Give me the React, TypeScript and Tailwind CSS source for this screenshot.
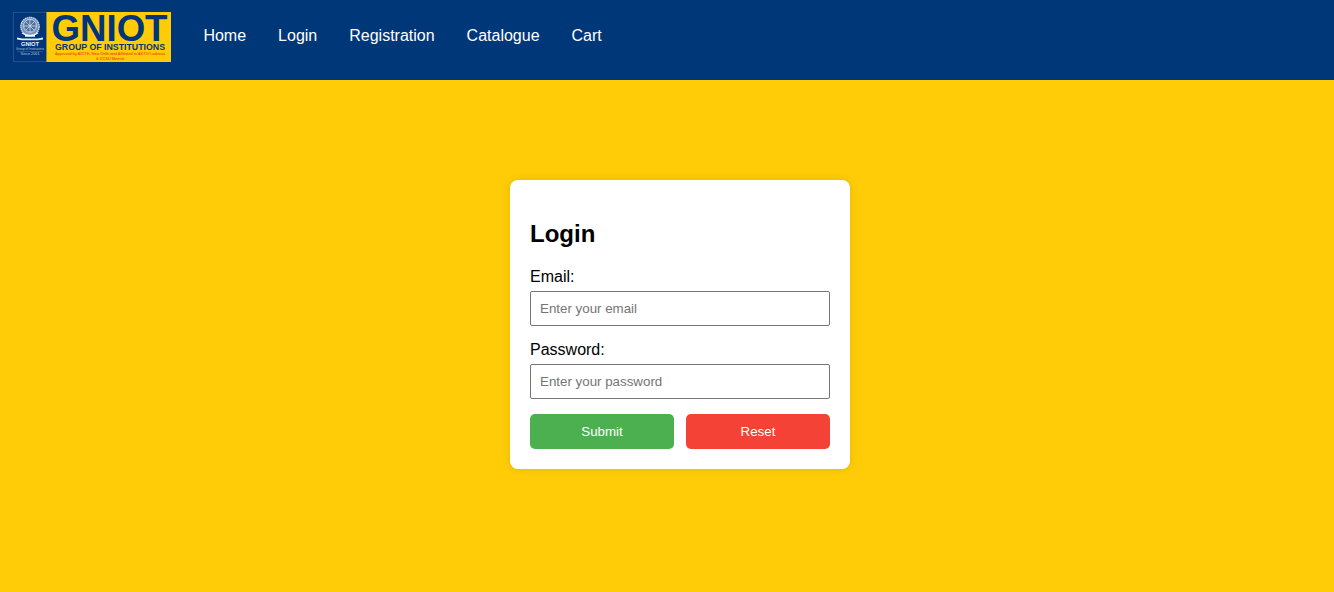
function Logo() {
  return (
    <svg width="158" height="50" viewBox="0 0 158 50" className="block shrink-0 overflow-visible" fontFamily="'Liberation Sans', Arial, sans-serif" textAnchor="middle">
      <rect x="0.5" y="0.5" width="33" height="49" fill="#00357a" stroke="#2c5690" strokeWidth="0.8" />
      <rect x="33.5" y="0" width="124.5" height="50" fill="#ffcc07" />
      <circle cx="17" cy="14.6" r="9.2" fill="#7894b8" stroke="#dbe5f0" strokeWidth="1.2" strokeDasharray="1.6 .5" />
      <circle cx="17" cy="13.8" r="6.4" fill="#496f9f" stroke="#e3ebf4" strokeWidth="0.8" />
      <path d="M17 8v12M11 14h12M13 10l8 8M21 10l-8 8" stroke="#d3deeb" strokeWidth="0.8" />
      <path d="M9 21q8 5 16 0M12 24h10" fill="none" stroke="#f4f7fb" strokeWidth="1.4" />
      <path d="M4 25.5l5 1h16l5-1v2l-5 .8H9l-5-.8z" fill="#e8eef5" />
      <text x="17" y="34.2" fontSize="6" fontWeight="700" fill="#f1f5fa" textLength="18" lengthAdjust="spacingAndGlyphs">GNIOT</text>
      <text x="17" y="38.4" fontSize="3.3" fill="#b4c5d9" textLength="28" lengthAdjust="spacingAndGlyphs">Group of Institutions</text>
      <path d="M4 39.6h26" stroke="#6484ad" strokeWidth="0.4" />
      <text x="17" y="43.4" fontSize="4" fill="#b4c5d9" textLength="19" lengthAdjust="spacingAndGlyphs">Since 2001</text>
      <text x="96.5" y="29" fontSize="36.5" fontWeight="700" fill="#00357a" textLength="116" lengthAdjust="spacingAndGlyphs">GNIOT</text>
      <text x="97" y="38" fontSize="8.8" fontWeight="700" fill="#00357a" textLength="110" lengthAdjust="spacingAndGlyphs">GROUP OF INSTITUTIONS</text>
      <text x="97" y="43.4" fontSize="4.4" fill="#f4511e" stroke="#f4511e" strokeWidth="0.12" textLength="110" lengthAdjust="spacingAndGlyphs">Approved by AICTE, New Delhi and Affiliated to AKTU Lucknow</text>
      <text x="97" y="47.8" fontSize="4.4" fill="#f4511e" stroke="#f4511e" strokeWidth="0.12" textLength="28" lengthAdjust="spacingAndGlyphs">&amp; CCSU Meerut</text>
    </svg>
  );
}

const links = ["Home", "Login", "Registration", "Catalogue", "Cart"];

function Field({ id, label, placeholder, type }: { id: string; label: string; placeholder: string; type: string }) {
  return (
    <div>
      <label htmlFor={id} className="mb-[5px] block leading-[18px]">{label}</label>
      <input id={id} type={type} placeholder={placeholder} className="block h-[35px] w-full rounded-[2px] border border-[#767676] bg-white px-[9px] text-[13.333px] placeholder:text-[#757575]" />
    </div>
  );
}

export default function App() {
  return (
    <div className="flex h-screen flex-col bg-[#ffcc07] font-['Liberation_Sans',Arial,sans-serif] text-base text-black">
      <header className="flex h-20 shrink-0 items-start bg-[#003778] pt-3 pl-[13px]">
        <Logo />
        <nav className="ml-[32.4px] flex gap-8 pt-[15px]">
          {links.map((link) => (
            <a key={link} href="#" className="leading-[18px] text-white">{link}</a>
          ))}
        </nav>
      </header>
      <main className="flex justify-center pt-[100px] pl-[26px]">
        <form className="h-[289px] w-[340px] rounded-lg bg-white px-5 pt-10 shadow-[0_0_10px_rgba(0,0,0,0.1)]">
          <h2 className="mb-[21px] text-2xl leading-[27px] font-bold">Login</h2>
          <div className="mb-[15px] flex flex-col gap-[15px]">
            <Field id="email" label="Email:" placeholder="Enter your email" type="email" />
            <Field id="password" label="Password:" placeholder="Enter your password" type="password" />
          </div>
          <div className="flex gap-3 text-[13.333px] text-white">
            <button type="submit" className="h-[35px] flex-1 rounded-[5px] bg-[#4caf50]">Submit</button>
            <button type="reset" className="h-[35px] flex-1 rounded-[5px] bg-[#f44336]">Reset</button>
          </div>
        </form>
      </main>
    </div>
  );
}
